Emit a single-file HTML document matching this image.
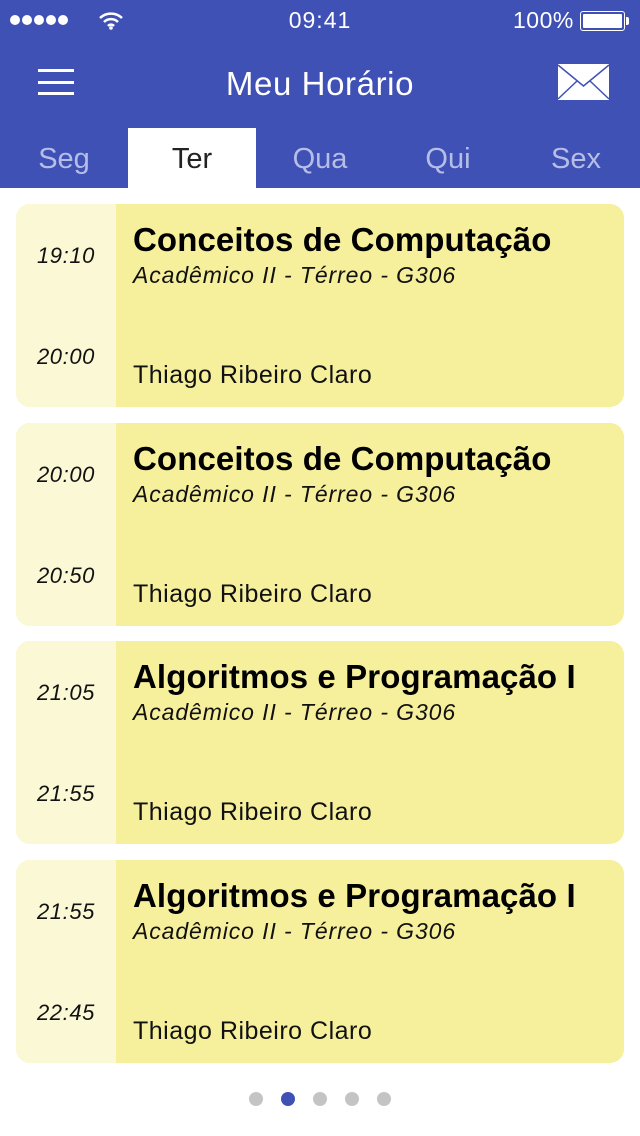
<!DOCTYPE html>
<html><head><meta charset="utf-8"><style>
*{margin:0;padding:0;box-sizing:border-box}
body{width:640px;height:1136px;background:#fff;font-family:"Liberation Sans",sans-serif;position:relative;overflow:hidden}
.hdr{position:absolute;left:0;top:0;width:640px;height:188px;background:#3F51B5;color:#fff}
.abs{position:absolute}
.sd{position:absolute;top:15px;width:10px;height:10px;border-radius:50%;background:#fff}
.tab{position:absolute;top:128px;width:128px;height:60px;text-align:center;font-size:29px;line-height:62px;color:#B6BEE8}
.tab.on{background:#fff;color:#222}
.card{position:absolute;left:16px;width:608px;height:203px;border-radius:14px;background:#F6EF9B;overflow:hidden}
.card .l{position:absolute;left:0;top:0;width:100px;height:100%;background:#FBF8D6}
.t{position:absolute;left:0;width:100px;text-align:center;font-style:italic;font-size:22px;letter-spacing:0.6px;color:#111}
.ti{position:absolute;left:117px;top:17px;font-size:33px;font-weight:bold;color:#000;letter-spacing:0.1px;white-space:nowrap}
.su{position:absolute;left:117px;top:58px;font-size:23px;font-style:italic;color:#111;letter-spacing:0.9px;white-space:nowrap}
.nm{position:absolute;left:117px;top:157px;font-size:25px;color:#111;letter-spacing:0.5px;white-space:nowrap}
.dot{position:absolute;top:1092px;width:14px;height:14px;border-radius:50%;background:#C4C4C4}
</style></head><body>
<div class="hdr">
 <div class="sd" style="left:10px"></div><div class="sd" style="left:22px"></div><div class="sd" style="left:34px"></div><div class="sd" style="left:46px"></div><div class="sd" style="left:58px"></div>
 <svg class="abs" style="left:98px;top:10px" width="26" height="20" viewBox="0 0 26 20"><path d="M2 8a16 16 0 0 1 22 0M6 12a10 10 0 0 1 14 0M10 16a4 4 0 0 1 6 0" stroke="#fff" stroke-width="2.5" fill="none"/><circle cx="13" cy="18" r="1.8" fill="#fff"/></svg>
 <div class="abs" style="left:0;width:640px;top:7px;text-align:center;font-size:23px;letter-spacing:1px">09:41</div>
 <div class="abs" style="left:513px;top:7px;font-size:23px;letter-spacing:0.5px">100%</div>
 <div class="abs" style="left:580px;top:11px;width:45px;height:20px;border:1.5px solid #fff;border-radius:3px;padding:2px"><div style="width:100%;height:100%;background:#fff;border-radius:1px"></div></div>
 <div class="abs" style="left:626px;top:17px;width:3px;height:8px;background:#fff;border-radius:0 2px 2px 0"></div>
 <div class="abs" style="left:38px;top:69px;width:36px;height:3px;background:#fff"></div>
 <div class="abs" style="left:38px;top:81px;width:36px;height:3px;background:#fff"></div>
 <div class="abs" style="left:38px;top:92px;width:36px;height:3px;background:#fff"></div>
 <div class="abs" style="left:0;width:640px;top:65px;text-align:center;font-size:33px;letter-spacing:0.6px">Meu Horário</div>
 <svg class="abs" style="left:558px;top:64px" width="51" height="36" viewBox="0 0 51 36"><rect width="51" height="36" fill="#fff"/><path d="M0 1L25.5 22L51 1M0 35L19 17M51 35L32 17" stroke="#3F51B5" stroke-width="1.5" fill="none"/></svg>
 <div class="tab" style="left:0">Seg</div>
 <div class="tab on" style="left:128px">Ter</div>
 <div class="tab" style="left:256px">Qua</div>
 <div class="tab" style="left:384px">Qui</div>
 <div class="tab" style="left:512px">Sex</div>
</div>
<div class="card" style="top:204px"><div class="l"></div><div class="t" style="top:39px">19:10</div><div class="t" style="top:140px">20:00</div><div class="ti">Conceitos de Computação</div><div class="su">Acadêmico II - Térreo - G306</div><div class="nm">Thiago Ribeiro Claro</div></div>
<div class="card" style="top:423px"><div class="l"></div><div class="t" style="top:39px">20:00</div><div class="t" style="top:140px">20:50</div><div class="ti">Conceitos de Computação</div><div class="su">Acadêmico II - Térreo - G306</div><div class="nm">Thiago Ribeiro Claro</div></div>
<div class="card" style="top:641px"><div class="l"></div><div class="t" style="top:39px">21:05</div><div class="t" style="top:140px">21:55</div><div class="ti">Algoritmos e Programação I</div><div class="su">Acadêmico II - Térreo - G306</div><div class="nm">Thiago Ribeiro Claro</div></div>
<div class="card" style="top:860px"><div class="l"></div><div class="t" style="top:39px">21:55</div><div class="t" style="top:140px">22:45</div><div class="ti">Algoritmos e Programação I</div><div class="su">Acadêmico II - Térreo - G306</div><div class="nm">Thiago Ribeiro Claro</div></div>
<div class="dot" style="left:249px"></div>
<div class="dot" style="left:281px;background:#3F51B5"></div>
<div class="dot" style="left:313px"></div>
<div class="dot" style="left:345px"></div>
<div class="dot" style="left:377px"></div>
</body></html>
